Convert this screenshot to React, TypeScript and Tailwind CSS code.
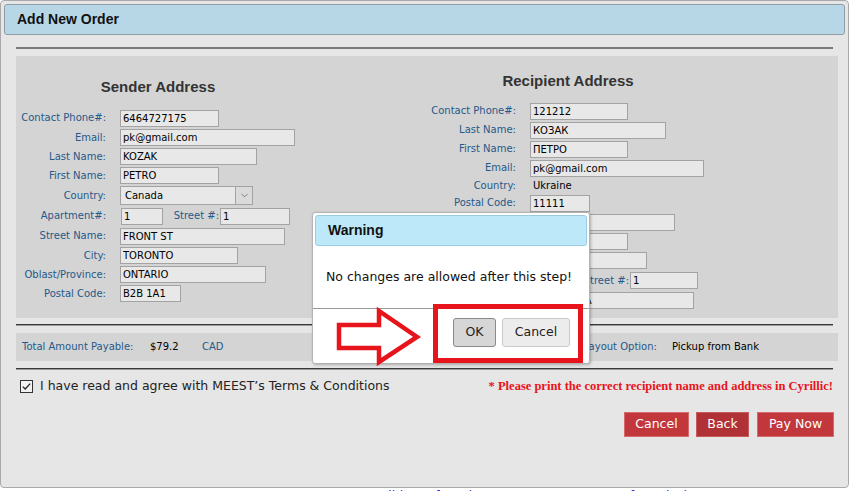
import { ChevronDown } from "lucide-react";
import type { ReactNode } from "react";

type RowProps = { label?: string; h: string; children?: ReactNode };

function Row({ label, h, children }: RowProps) {
  return (
    <div className={`flex items-center ${h}`}>
      <span className="w-[90px] shrink-0 text-right text-[10px] leading-none text-[#24598a]">{label}</span>
      <div className="ml-[14px] flex items-center">{children}</div>
    </div>
  );
}

function Field({ w, value = "" }: { w: string; value?: string }) {
  return (
    <input
      readOnly
      value={value}
      className={`${w} h-[17px] border border-[#a3a3a3] bg-[#e8e8e8] px-[2px] text-[10px] leading-none text-black outline-none`}
    />
  );
}

function Heading({ children }: { children: ReactNode }) {
  return (
    <h2 className="mb-[12px] h-[18px] w-[284px] text-center font-['Liberation_Sans',Arial,sans-serif] text-[15px] font-bold leading-[18px] text-[#333]">
      {children}
    </h2>
  );
}

function Rule() {
  return <div className="h-[2px] w-[817px] border-t border-[#3a3a3a] bg-[#9a9a9a]" />;
}

export default function App() {
  return (
    <div className="relative h-[491px] w-[850px] overflow-hidden bg-white font-['DejaVu_Sans',sans-serif] text-black">
      {/* outer frame */}
      <div className="h-[488px] w-[849px] rounded-[4px] border border-[#a9a9a9] bg-[#e6e6e6]">
        <div className="mx-[3px] mt-[3px] flex h-[31px] items-center rounded-[3px] border border-[#8f9ea6] bg-[#b7d7e6] pl-[12px] font-['Liberation_Sans',Arial,sans-serif] text-[14px] font-bold text-[#111]">
          Add New Order
        </div>

        <div className="ml-[15px] w-[822px]">
          <div className="mt-[12px] h-[2px] w-[817px] bg-[#7a7a7a]" />

          {/* addresses */}
          <div className="mt-[7px] grid h-[262px] grid-cols-[410px_412px] items-center bg-[#d4d4d4] pt-[7px]">
            <div>
              <Heading>Sender Address</Heading>
              <Row label="Contact Phone#:" h="h-[20px]"><Field w="w-[99px]" value="6464727175" /></Row>
              <Row label="Email:" h="h-[19px]"><Field w="w-[175px]" value="pk@gmail.com" /></Row>
              <Row label="Last Name:" h="h-[19px]"><Field w="w-[137px]" value="KOZAK" /></Row>
              <Row label="First Name:" h="h-[19px]"><Field w="w-[99px]" value="PETRO" /></Row>
              <Row label="Country:" h="h-[21px]">
                <div className="flex h-[19px] w-[133px] items-center border border-[#a3a3a3] bg-[#e8e8e8]">
                  <span className="flex-1 pl-[4px] text-[10px] leading-none">Canada</span>
                  <span className="flex h-full w-[17px] items-center justify-center border-l border-[#a3a3a3] bg-[#dadada]">
                    <ChevronDown size={11} strokeWidth={1.5} className="text-[#555]" />
                  </span>
                </div>
              </Row>
              <Row label="Apartment#:" h="h-[20px]">
                <span className="ml-[1px] flex"><Field w="w-[42px]" value="1" /></span>
                <span className="w-[56px] text-right text-[10px] leading-none text-[#24598a]">Street #:</span>
                <span className="ml-[1px] flex"><Field w="w-[70px]" value="1" /></span>
              </Row>
              <Row label="Street Name:" h="h-[20px]"><Field w="w-[165px]" value="FRONT ST" /></Row>
              <Row label="City:" h="h-[19px]"><Field w="w-[118px]" value="TORONTO" /></Row>
              <Row label="Oblast/Province:" h="h-[19px]"><Field w="w-[146px]" value="ONTARIO" /></Row>
              <Row label="Postal Code:" h="h-[19px]"><Field w="w-[61px]" value="B2B 1A1" /></Row>
            </div>

            <div>
              <Heading>Recipient Address</Heading>
              <Row label="Contact Phone#:" h="h-[19px]"><Field w="w-[98px]" value="121212" /></Row>
              <Row label="Last Name:" h="h-[19px]"><Field w="w-[136px]" value="КОЗАК" /></Row>
              <Row label="First Name:" h="h-[19px]"><Field w="w-[98px]" value="ПЕТРО" /></Row>
              <Row label="Email:" h="h-[19px]"><Field w="w-[174px]" value="pk@gmail.com" /></Row>
              <Row label="Country:" h="h-[16px]">
                <span className="pl-[3px] text-[10px] leading-none">Ukraine</span>
              </Row>
              <Row label="Postal Code:" h="h-[19px]"><Field w="w-[60px]" value="11111" /></Row>
              <Row label="Oblast/Province:" h="h-[19px]"><Field w="w-[145px]" value="КИЇВ" /></Row>
              <Row label="District:" h="h-[19px]"><Field w="w-[98px]" /></Row>
              <Row label="City:" h="h-[20px]"><Field w="w-[117px]" value="КИЇВ" /></Row>
              <Row label="Apartment#:" h="h-[20px]">
                <span className="ml-[1px] flex"><Field w="w-[42px]" value="1" /></span>
                <span className="w-[56px] text-right text-[10px] leading-none text-[#24598a]">Street #:</span>
                <span className="ml-[1px] flex"><Field w="w-[68px]" value="1" /></span>
              </Row>
              <Row label="Street Name:" h="h-[19px]"><Field w="w-[164px]" value="ШЕВЧЕНКА" /></Row>
            </div>
          </div>

          <div className="mt-[6px]"><Rule /></div>

          {/* totals */}
          <div className="mt-[7px] flex h-[28px] items-center bg-[#d4d4d4] pl-[6px] text-[10px] leading-none">
            <span className="w-[128px] text-[#24598a]">Total Amount Payable:</span>
            <span className="w-[52px]">$79.2</span>
            <span className="w-[381px] text-[#24598a]">CAD</span>
            <span className="w-[89px] text-[#24598a]">Payout Option:</span>
            <span>Pickup from Bank</span>
          </div>

          <div className="mt-[7px]"><Rule /></div>

          <div className="mt-[6px] flex h-[20px] items-center justify-between pr-[5px]">
            <label className="flex items-center pl-[4px]">
              <svg width="13" height="13" viewBox="0 0 13 13" className="shrink-0">
                <rect x="0.5" y="0.5" width="12" height="12" fill="#f2f2f2" stroke="#333" />
                <path d="M2.8 6.6 L5.2 9 L10.2 3.6" fill="none" stroke="#222" strokeWidth="1.3" />
              </svg>
              <span className="ml-[7px] text-[12.5px] leading-none text-[#222]">
                I have read and agree with MEEST’s Terms &amp; Conditions
              </span>
            </label>
            <span className="font-['Liberation_Serif','Times_New_Roman',serif] text-[12.5px] font-bold leading-none text-[#e8141c]">
              * Please print the correct recipient name and address in Cyrillic!
            </span>
          </div>

          <div className="mt-[16px] flex justify-end gap-[7px] pr-[4px] text-[12.5px] leading-none text-white">
            <button className="h-[25px] w-[65px] border border-[#d46a6d] bg-[#c1373c]">Cancel</button>
            <button className="h-[25px] w-[53px] border border-[#c65b5e] bg-[#b03237]">Back</button>
            <button className="ml-[1px] h-[25px] w-[77px] border border-[#d46a6d] bg-[#c1373c]">Pay Now</button>
          </div>
        </div>
      </div>

      {/* page links below the frame */}
      <div className="flex pt-[1px] text-[12px] leading-[14px] text-[#1a1aff] underline">
        <span className="ml-[256px]">Contact</span>
        <span className="ml-[58px]">Conditions of Carriage</span>
        <span className="ml-[60px]">Money Transfer Calculator</span>
      </div>

      {/* warning dialog */}
      <div className="absolute left-[312px] top-[212px] flex h-[152px] w-[278px] flex-col rounded-[3px] border border-[#b3b3b3] bg-white shadow-[1px_1px_3px_rgba(0,0,0,0.25)]">
        <div className="mx-[2px] mt-[2px] flex h-[31px] items-center rounded-[3px] border border-[#9ccbe0] bg-[#bde8fa] pl-[12px] font-['Liberation_Sans',Arial,sans-serif] text-[14px] font-bold text-[#111]">
          Warning
        </div>
        <div className="flex h-[62px] items-center px-[13px] text-[12.5px] leading-none text-[#111]">
          No changes are allowed after this step!
        </div>
        <div className="border-t border-[#9a9a9a]" />
        <div className="flex justify-end gap-[6px] pr-[19px] pt-[9px] text-[12.5px] leading-none text-[#222]">
          <button className="h-[29px] w-[43px] rounded-[3px] border border-[#8a8a8a] bg-[#d6d6d6]">OK</button>
          <button className="h-[29px] w-[68px] rounded-[3px] border border-[#cacaca] bg-[#ececec]">Cancel</button>
        </div>
      </div>

      {/* annotation: red box and arrow */}
      <div className="absolute left-[433px] top-[304px] h-[59px] w-[150px] border-[5px] border-[#e8141c]" />
      <svg className="absolute left-[330px] top-[305px]" width="95" height="62" viewBox="0 0 95 62">
        <polygon
          points="9,20 49,20 49,6 87,32 49,57 49,43 9,43"
          fill="white"
          stroke="#e8141c"
          strokeWidth="4.5"
          strokeLinejoin="miter"
        />
      </svg>
    </div>
  );
}
